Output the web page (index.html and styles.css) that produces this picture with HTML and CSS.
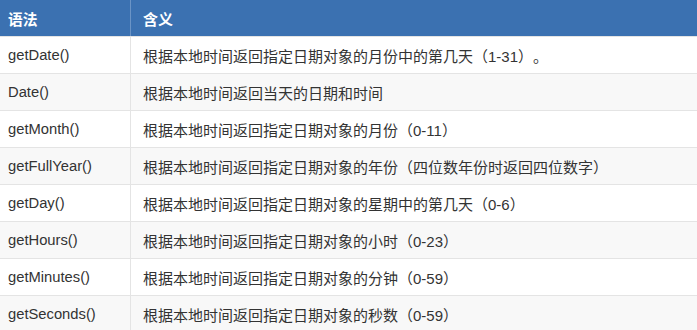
FILE: index.html
```html
<!DOCTYPE html>
<html lang="zh">
<head>
<meta charset="utf-8">
<link rel="stylesheet" href="styles.css">
</head>
<body>
<table class="ref">
  <thead>
    <tr><th class="c1">语法</th><th class="c2">含义</th></tr>
  </thead>
  <tbody>
    <tr><td class="c1">getDate()</td><td class="c2">根据本地时间返回指定日期对象的月份中的第几天（1-31）。</td></tr>
    <tr><td class="c1">Date()</td><td class="c2">根据本地时间返回当天的日期和时间</td></tr>
    <tr><td class="c1">getMonth()</td><td class="c2">根据本地时间返回指定日期对象的月份（0-11）</td></tr>
    <tr><td class="c1">getFullYear()</td><td class="c2">根据本地时间返回指定日期对象的年份（四位数年份时返回四位数字）</td></tr>
    <tr><td class="c1">getDay()</td><td class="c2">根据本地时间返回指定日期对象的星期中的第几天（0-6）</td></tr>
    <tr><td class="c1">getHours()</td><td class="c2">根据本地时间返回指定日期对象的小时（0-23）</td></tr>
    <tr><td class="c1">getMinutes()</td><td class="c2">根据本地时间返回指定日期对象的分钟（0-59）</td></tr>
    <tr><td class="c1">getSeconds()</td><td class="c2">根据本地时间返回指定日期对象的秒数（0-59）</td></tr>
  </tbody>
</table>
</body>
</html>
```
FILE: styles.css
```css
html, body {
  margin: 0;
  padding: 0;
  background: #ffffff;
}
body {
  font-family: "Liberation Sans", "Noto Sans CJK SC", sans-serif;
  font-size: 15px;
  color: #333333;
  text-spacing-trim: space-all;
}
.ref {
  border-collapse: collapse;
  width: 697px;
  table-layout: fixed;
}
.ref th, .ref td {
  text-align: left;
  white-space: nowrap;
  overflow: hidden;
  padding: 0;
}
.ref .c1 {
  width: 122px;
  padding-left: 8px;
  font-size: 14.75px;
}
.ref .c2 {
  padding-left: 12px;
}
.ref th {
  height: 36px;
  background: #3b71b1;
  color: #ffffff;
  font-weight: bold;
  border-bottom: 1px solid #e4e4e4;
}
.ref th.c1 {
  border-right: 1px solid #6b94c6;
}
.ref td {
  height: 36px;
  border-bottom: 1px solid #e4e4e4;
}
.ref td.c1 {
  border-right: 1px solid #e4e4e4;
}
.ref tbody tr:nth-child(even) td {
  background: #f8f8f8;
}
```
